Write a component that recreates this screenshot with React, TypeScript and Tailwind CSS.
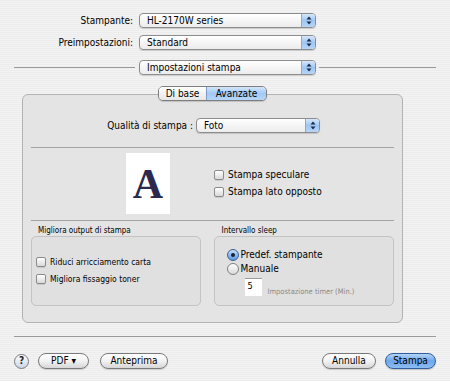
import React from "react";

const font = { fontFamily: '"DejaVu Sans Condensed", "DejaVu Sans", sans-serif' };

function Arrows() {
  return (
    <svg width="6" height="9" viewBox="0 0 6 9">
      <path d="M3 0.5 L5.5 3.5 L0.5 3.5 Z" fill="#1b2a48" />
      <path d="M3 8.5 L5.5 5.5 L0.5 5.5 Z" fill="#1b2a48" />
    </svg>
  );
}

function Popup({ text, w }: { text: string; w: string }) {
  return (
    <div
      className={`${w} h-[15px] flex items-stretch rounded-[4px] border border-[#8d8d8d] bg-linear-to-b from-white to-[#ececec] shadow-[0_1px_1px_rgba(0,0,0,0.15)] overflow-hidden`}
    >
      <div className="flex-1 flex items-center pl-[7px] text-[10px] leading-none text-black">{text}</div>
      <div className="w-[14px] flex items-center justify-center border-l border-[#8fa9cc] bg-linear-to-b from-[#d6e7fb] via-[#9fc6f2] to-[#b5d5f8]">
        <Arrows />
      </div>
    </div>
  );
}

function Check({ label, size = "text-[10px]" }: { label: string; size?: string }) {
  return (
    <div className="h-[14px] flex items-center">
      <div className="w-[10px] h-[10px] rounded-[2px] border border-[#8a8a8a] bg-linear-to-b from-white to-[#d9d9d9] shadow-[0_1px_0_rgba(0,0,0,0.1)]" />
      <span className={`ml-[4px] ${size} leading-none text-black`}>{label}</span>
    </div>
  );
}

function Radio({ label, on }: { label: string; on?: boolean }) {
  return (
    <div className="h-[14px] flex items-center">
      {on ? (
        <div className="w-[12px] h-[12px] rounded-full border border-[#3f5f8f] bg-linear-to-b from-[#c6defa] to-[#5a97e4] flex items-center justify-center">
          <div className="w-[4px] h-[4px] rounded-full bg-[#15213a]" />
        </div>
      ) : (
        <div className="w-[12px] h-[12px] rounded-full border border-[#808080] bg-linear-to-b from-white to-[#dadada]" />
      )}
      <span className="ml-[2px] text-[10px] leading-none text-black">{label}</span>
    </div>
  );
}

function Btn({ children, w }: { children: React.ReactNode; w: string }) {
  return (
    <div
      className={`${w} h-[16px] rounded-full border border-[#7a7a7a] bg-linear-to-b from-white via-[#f2f2f2] to-[#d6d6d6] flex items-center justify-center text-[10px] leading-none text-black shadow-[0_1px_1px_rgba(0,0,0,0.15)]`}
    >
      {children}
    </div>
  );
}

export default function App() {
  return (
    <div
      className="w-[450px] h-[381px] overflow-hidden bg-[repeating-linear-gradient(to_bottom,#ececec_0px,#ececec_1px,#f3f3f3_1px,#f3f3f3_2px)] text-black"
      style={font}
    >
      <div className="pt-[13px]">
        <div className="flex items-center h-[15px]">
          <div className="w-[133px] text-right text-[10px] leading-none">Stampante:</div>
          <div className="ml-[6px]">
            <Popup text="HL-2170W series" w="w-[177px]" />
          </div>
        </div>
        <div className="flex items-center h-[15px] mt-[7px]">
          <div className="w-[133px] text-right text-[10px] leading-none">Preimpostazioni:</div>
          <div className="ml-[6px]">
            <Popup text="Standard" w="w-[177px]" />
          </div>
        </div>
        <div className="flex items-center h-[15px] mt-[10px] px-[14px]">
          <div className="w-[121px] h-px bg-[#9a9a9a]" />
          <div className="ml-[4px]">
            <Popup text="Impostazioni stampa" w="w-[177px]" />
          </div>
          <div className="ml-[3px] flex-1 h-px bg-[#9a9a9a]" />
        </div>
      </div>

      {/* tabs + panel */}
      <div className="mt-[11px] ml-[22px] w-[381px]">
        <div className="relative z-10 flex justify-center h-[15px]">
          <div className="flex h-[15px] rounded-[5px] border border-[#7d7d7d] overflow-hidden shadow-[0_1px_1px_rgba(0,0,0,0.15)]">
            <div className="w-[47px] flex items-center justify-center bg-linear-to-b from-white to-[#e6e6e6] text-[10px] leading-none">
              Di base
            </div>
            <div className="w-[60px] flex items-center justify-center border-l border-[#7d9cc6] bg-linear-to-b from-[#d3e6fb] via-[#a2c9f3] to-[#b5d6f8] text-[10px] leading-none">
              Avanzate
            </div>
          </div>
        </div>
        <div className="w-[381px] h-[229px] mt-[-7px] rounded-[6px] border border-[#b2b2b2] bg-[#e4e4e4] px-[8px]">
          <div className="pt-[23px] flex items-center h-[38px]">
            <div className="w-[162px] text-right text-[10px] leading-none">Qualità di stampa :</div>
            <div className="ml-[3px]">
              <Popup text="Foto" w="w-[124px]" />
            </div>
          </div>
          <div className="mt-[14px] h-px bg-[#a3a3a3]" />
          <div className="mt-[5px] flex h-[61px]">
            <div className="ml-[95px] w-[44px] h-[61px] bg-white flex items-center justify-center">
              <span
                className="text-[42px] font-bold leading-none text-[#2b2a4e]"
                style={{ fontFamily: '"Liberation Serif", serif' }}
              >
                A
              </span>
            </div>
            <div className="ml-[44px] pt-[15px] flex flex-col gap-[3px]">
              <Check label="Stampa speculare" />
              <Check label="Stampa lato opposto" />
            </div>
          </div>
          <div className="mt-[6px] h-px bg-[#a3a3a3]" />
          <div className="mt-[4px] flex">
            <div className="w-[170px] flex flex-col">
              <div className="h-[11px] pl-[7px] text-[8px] leading-[11px]">Migliora output di stampa</div>
              <div className="h-[70px] rounded-[5px] border border-[#c3c3c3] bg-[#e0e0e0] pl-[4px] pt-[18px] flex flex-col gap-[3px]">
                <Check label="Riduci arricciamento carta" size="text-[8.5px]" />
                <Check label="Migliora fissaggio toner" size="text-[8.5px]" />
              </div>
            </div>
            <div className="ml-[13px] w-[181px] flex flex-col">
              <div className="h-[11px] pl-[8px] text-[8px] leading-[11px]">Intervallo sleep</div>
              <div className="h-[70px] rounded-[5px] border border-[#c3c3c3] bg-[#e0e0e0] pl-[12px] pt-[11px] flex flex-col">
                <Radio label="Predef. stampante" on />
                <Radio label="Manuale" />
                <div className="mt-[2px] ml-[18px] flex items-end">
                  <div className="w-[17px] h-[18px] bg-white border-t border-[#9a9a9a] pl-[3px] pt-[3px] text-[9px] leading-none">
                    5
                  </div>
                  <div className="ml-[6px] mb-[1px] text-[7.5px] leading-none text-[#8a8a8a]">
                    Impostazione timer (Min.)
                  </div>
                </div>
              </div>
            </div>
          </div>
        </div>
      </div>

      <div className="mt-[13px] mx-[14px] w-[422px] h-px bg-[#9a9a9a]" />

      <div className="mt-[16px] flex items-center px-[14px] h-[16px]">
        <div className="w-[15px] h-[15px] rounded-full border border-[#7a7a7a] bg-linear-to-b from-white to-[#c9d5e8] flex items-center justify-center text-[10px] font-bold leading-none text-[#222]">
          ?
        </div>
        <div className="ml-[9px]">
          <Btn w="w-[51px]">PDF ▾</Btn>
        </div>
        <div className="ml-[11px]">
          <Btn w="w-[68px]">Anteprima</Btn>
        </div>
        <div className="flex-1" />
        <Btn w="w-[54px]">Annulla</Btn>
        <div className="ml-[9px]">
          <div className="w-[51px] h-[16px] rounded-full border border-[#2f5e9e] bg-linear-to-b from-[#b3d3f7] via-[#6fa6eb] to-[#8cbdf2] flex items-center justify-center text-[10px] leading-none text-black shadow-[0_1px_1px_rgba(0,0,0,0.2)]">
            Stampa
          </div>
        </div>
      </div>
    </div>
  );
}
